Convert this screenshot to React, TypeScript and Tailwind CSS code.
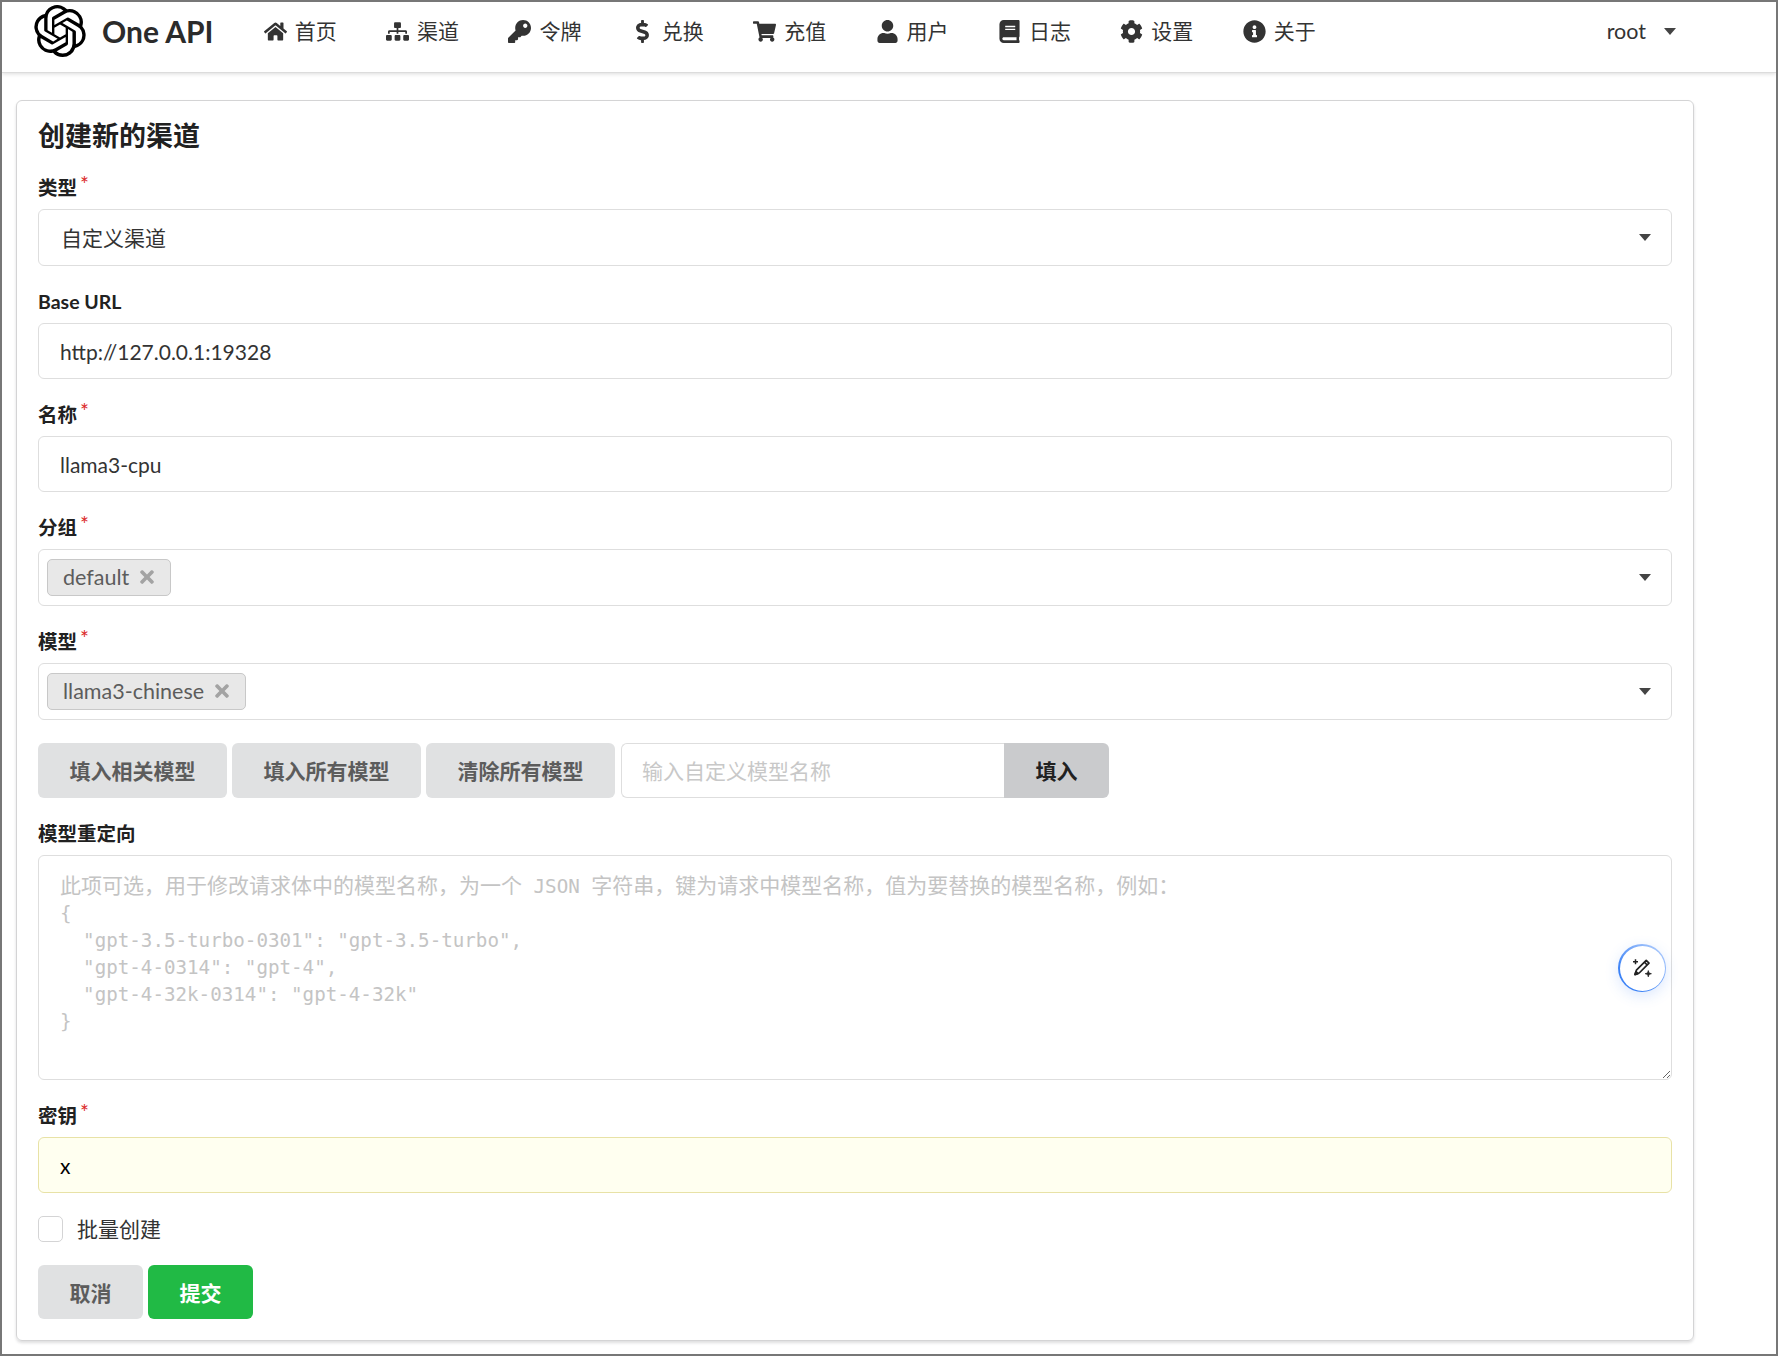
import React from 'react';
import {
  FaHome, FaSitemap, FaKey, FaDollarSign, FaShoppingCart,
  FaUser, FaBook, FaCog, FaInfoCircle, FaTimes
} from 'react-icons/fa';
import { SiOpenai } from 'react-icons/si';

const navItems = [
  { label: '首页', icon: FaHome },
  { label: '渠道', icon: FaSitemap },
  { label: '令牌', icon: FaKey },
  { label: '兑换', icon: FaDollarSign },
  { label: '充值', icon: FaShoppingCart },
  { label: '用户', icon: FaUser },
  { label: '日志', icon: FaBook },
  { label: '设置', icon: FaCog },
  { label: '关于', icon: FaInfoCircle },
];

const monoFont = { fontFamily: '"DejaVu Sans Mono", monospace' };

const Caret = () => (
  <span className="w-0 h-0 border-x-[6px] border-x-transparent border-t-[7px] border-t-[#444]" />
);

const FieldLabel = ({ text, required }: { text: string; required?: boolean }) => (
  <div className="h-[28px] mb-[8px] pt-[2px] flex items-center text-[19.5px] font-bold text-[#212121] leading-[28px]">
    {text}
    {required && <span className="text-[#db2828] text-[21px] font-normal ml-[3px] -mt-[8px]">*</span>}
  </div>
);

const TextInput = ({ value, className = '' }: { value: string; className?: string }) => (
  <input
    readOnly
    value={value}
    className={`block w-full h-[56px] px-[21px] text-[21px] rounded-[6px] border outline-none ${className || 'border-[#dedede] text-[#333] bg-white'}`}
  />
);

const Chip = ({ text }: { text: string }) => (
  <span className="-mt-[1px] ml-[1px] inline-flex items-center h-[37px] pl-[15px] pr-[13px] gap-[8px] rounded-[5px] bg-[#e8e8e8] border border-[#c8c8c8] text-[21.5px] text-[#5c5c5c]">
    {text}
    <FaTimes className="text-[#a3a3a3]" size={20} />
  </span>
);

const SelectBox = ({ children }: { children: React.ReactNode }) => (
  <div className="h-[57px] rounded-[6px] border border-[#dedede] flex items-center justify-between pl-[7px] pr-[20px] text-[21px] text-[#333]">
    <div className="flex items-center">{children}</div>
    <Caret />
  </div>
);

const GrayButton = ({ text, className = '' }: { text: string; className?: string }) => (
  <button className={`rounded-[6px] font-bold text-[21px] flex items-center justify-center ${className}`}>
    {text}
  </button>
);

const MagicButton = () => (
  <div className="absolute right-[6px] top-[89px] w-[48px] h-[48px] rounded-full p-[1.5px] bg-[linear-gradient(225deg,#bcd4fd_0%,#3b82f6_75%)] shadow-[0_4px_14px_rgba(59,130,246,0.18)]">
    <div className="w-full h-full rounded-full bg-white flex items-center justify-center">
      <svg width="22" height="22" viewBox="0 0 22 22" fill="none" stroke="#222" strokeWidth="1.7" strokeLinejoin="round">
        <path d="M15.2 3.4 18 6.2 8.2 16 4 17.4 5.4 13.2Z" />
        <path d="M13.4 5.2 16.2 8" />
        <path d="M4 17.6 5 14.6 7 16.6Z" fill="#222" />
        <path d="M4.5 2.2v5M2 4.7h5" strokeWidth="1.5" />
        <path d="M17.3 13.6 18 16 20.4 16.7 18 17.4 17.3 19.8 16.6 17.4 14.2 16.7 16.6 16Z" fill="#222" strokeWidth="0.8" />
      </svg>
    </div>
  </div>
);

const jsonLines = ['{', '  "gpt-3.5-turbo-0301": "gpt-3.5-turbo",', '  "gpt-4-0314": "gpt-4",', '  "gpt-4-32k-0314": "gpt-4-32k"', '}'];

export default function App() {
  return (
    <div
      className="h-[1356px] border-2 border-[#777] bg-white overflow-hidden text-[#333]"
      style={{ fontFamily: 'Lato, "Noto Sans CJK SC", sans-serif' }}
    >
      <nav className="h-[71px] pb-[12px] flex items-center border-b border-[#dcdcdc] shadow-[0_1px_4px_rgba(0,0,0,0.14)]">
        <SiOpenai size={52} className="ml-[32px] text-black shrink-0" />
        <span className="ml-[16px] text-[30px] font-bold text-[#2b2b2b] leading-none">One API</span>
        <div className="ml-[25px] flex items-center">
          {navItems.map(({ label, icon: Icon }) => (
            <div key={label} className="flex items-center px-[24.2px] text-[21px] text-[#333]">
              <span className="w-[25px] mr-[7px] flex justify-center text-[#333]">
                <Icon size={23} />
              </span>
              {label}
            </div>
          ))}
        </div>
        <div className="ml-auto mr-[100px] flex items-center text-[21.5px] text-[#333]">
          root
          <span className="ml-[18px] flex"><Caret /></span>
        </div>
      </nav>

      <main className="ml-[14px] mt-[27px] w-[1678px] h-[1241px] rounded-[6px] border border-[#d4d4d5] shadow-[0_2px_3px_rgba(34,36,38,0.15)] px-[21px] pt-[20px]">
        <h1 className="h-[30px] mb-[22px] text-[27px] font-bold text-[#212121] leading-[30px]">创建新的渠道</h1>

        <FieldLabel text="类型" required />
        <SelectBox><span className="pl-[15px]">自定义渠道</span></SelectBox>

        <div className="mt-[21px]">
          <FieldLabel text="Base URL" />
          <TextInput value="http://127.0.0.1:19328" />
        </div>

        <div className="mt-[21px]">
          <FieldLabel text="名称" required />
          <TextInput value="llama3-cpu" />
        </div>

        <div className="mt-[21px]">
          <FieldLabel text="分组" required />
          <SelectBox><Chip text="default" /></SelectBox>
        </div>

        <div className="mt-[21px]">
          <FieldLabel text="模型" required />
          <SelectBox><Chip text="llama3-chinese" /></SelectBox>
        </div>

        <div className="mt-[23px] flex gap-[5px]">
          <GrayButton text="填入相关模型" className="w-[189px] h-[55px] bg-[#e0e1e2] text-[#5c5c5c]" />
          <GrayButton text="填入所有模型" className="w-[189px] h-[55px] bg-[#e0e1e2] text-[#5c5c5c]" />
          <GrayButton text="清除所有模型" className="w-[189px] h-[55px] bg-[#e0e1e2] text-[#5c5c5c]" />
          <div className="ml-[1px] flex w-[488px]">
            <input
              readOnly
              placeholder="输入自定义模型名称"
              className="flex-1 min-w-0 h-[55px] px-[20px] text-[21px] rounded-l-[6px] border border-r-0 border-[#dedede] outline-none placeholder:text-[#c8c8c8]"
            />
            <GrayButton text="填入" className="w-[105px] h-[55px] pt-[1px] bg-[#cacbcd] text-[#212121] rounded-l-none" />
          </div>
        </div>

        <div className="mt-[21px]">
          <FieldLabel text="模型重定向" />
          <div className="relative">
            <textarea
              readOnly
              className="block w-full h-[225px] rounded-[6px] border border-[#dedede] outline-none resize-y"
            />
            <div className="absolute left-[22px] top-[16px] pointer-events-none text-[#c4c4c4] leading-[27px]">
              <div className="text-[21px]">
                此项可选，用于修改请求体中的模型名称，为一个<span className="text-[19.2px] whitespace-pre" style={monoFont}> JSON </span>字符串，键为请求中模型名称，值为要替换的模型名称，例如：
              </div>
              {jsonLines.map((line) => (
                <div key={line} className="text-[19.2px] whitespace-pre" style={monoFont}>{line}</div>
              ))}
            </div>
            <MagicButton />
          </div>
        </div>

        <div className="mt-[21px]">
          <FieldLabel text="密钥" required />
          <TextInput value="x" className="border-[#e8e2a6] bg-[#fffff0] text-black" />
        </div>

        <label className="mt-[22px] flex items-center h-[27px]">
          <span className="w-[25px] h-[26px] rounded-[5px] border border-[#d4d4d5] bg-white" />
          <span className="ml-[14px] text-[21px] text-[#333]">批量创建</span>
        </label>

        <div className="mt-[23px] flex gap-[5px]">
          <GrayButton text="取消" className="w-[105px] h-[54px] pt-[2px] bg-[#e0e1e2] text-[#5c5c5c]" />
          <GrayButton text="提交" className="w-[105px] h-[54px] pt-[2px] bg-[#21ba45] text-white" />
        </div>
      </main>
    </div>
  );
}
